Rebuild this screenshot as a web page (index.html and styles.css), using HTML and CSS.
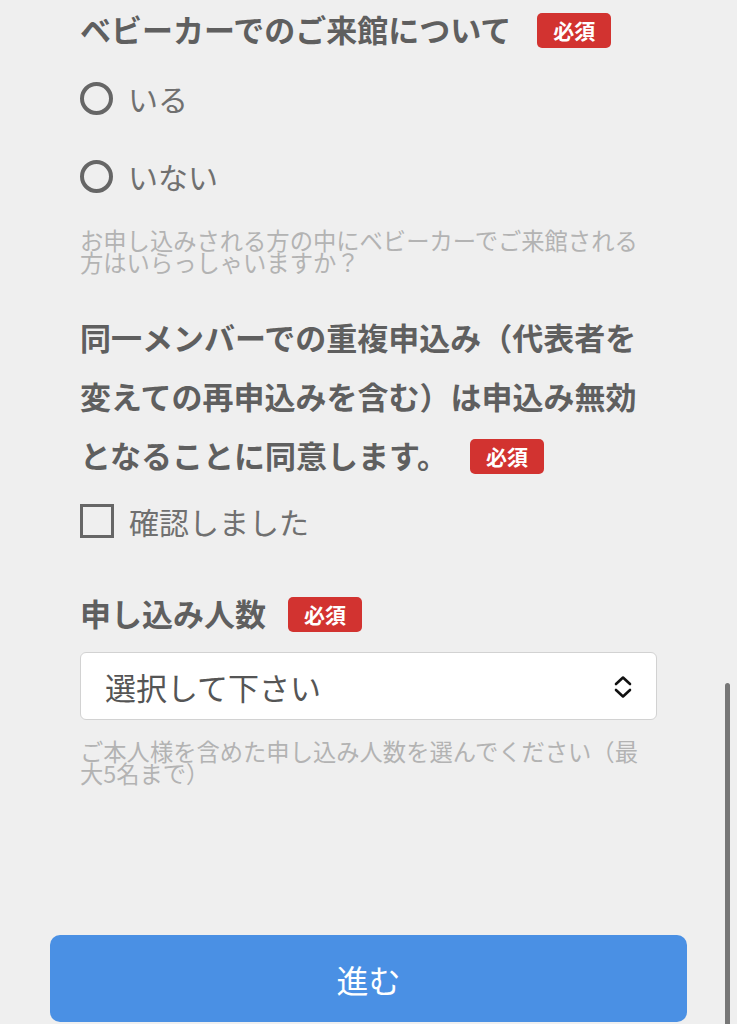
FILE: index.html
```html
<!DOCTYPE html>
<html lang="ja">
<head>
  <meta charset="UTF-8" />
  <meta name="viewport" content="width=device-width, initial-scale=1.0"/>
  <title>お申し込みフォーム</title>
  <link rel="stylesheet" href="styles.css">
</head>
<body>
  <form id="entry-form">
    <div class="campo">
      <p class="pregunta">ベビーカーでのご来館について<span class="requerido requerido-ancho">必須</span></p>
      <label class="opcion">
        <input type="radio" name="babycar" value="いる" />
        <span>いる</span>
      </label>
      <label class="opcion">
        <input type="radio" name="babycar" value="いない" />
        <span>いない</span>
      </label>
      <p class="ayuda">お申し込みされる方の中にベビーカーでご来館される方はいらっしゃいますか？</p>
    </div>

    <div class="campo">
      <p class="pregunta pregunta-larga">同一メンバーでの重複申込み（代表者を変えての再申込みを含む）は申込み無効となることに同意します。<span class="requerido">必須</span></p>
      <label class="opcion opcion-check">
        <input type="checkbox" name="agree" />
        <span>確認しました</span>
      </label>
    </div>

    <div class="campo campo-personas">
      <p class="pregunta">申し込み人数<span class="requerido">必須</span></p>
      <div class="selector">
        <select name="personas">
          <option value="">選択して下さい</option>
          <option value="1">1名</option>
          <option value="2">2名</option>
          <option value="3">3名</option>
          <option value="4">4名</option>
          <option value="5">5名</option>
        </select>
        <svg class="flechas" width="20" height="24" viewBox="0 0 20 24" fill="none" stroke="#111" stroke-width="2.6" stroke-linecap="round" stroke-linejoin="round">
          <polyline points="3,9 10,2.5 17,9" />
          <polyline points="3,15 10,21.5 17,15" />
        </svg>
      </div>
      <p class="ayuda">ご本人様を含めた申し込み人数を選んでください（最大5名まで）</p>
    </div>

    <div class="acciones">
      <button type="submit">進む</button>
    </div>
  </form>

  <div class="scrollbar"></div>
</body>
</html>
```

FILE: styles.css
```css
body {
  margin: 0;
  background-color: #efefef;
  font-family: "Noto Sans CJK JP", "Noto Sans", sans-serif;
  color: #666;
}
#entry-form {
  padding: 0 80px;
}
.campo {
  margin: 0;
}
.pregunta {
  margin: 0;
  font-size: 31px;
  line-height: 58px;
  font-weight: bold;
  color: #5f5f5f;
}
.pregunta-larga {
  margin-top: 34px;
  line-height: 59px;
}
.campo-personas .pregunta {
  margin-top: 26px;
  line-height: 59px;
}
.requerido {
  display: inline-block;
  vertical-align: middle;
  margin-left: 22px;
  margin-top: -6px;
  width: 74px;
  height: 35px;
  line-height: 35px;
  text-align: center;
  background: #d23330;
  color: #fff;
  font-size: 21px;
  font-weight: bold;
  border-radius: 5px;
}
.requerido-ancho {
  margin-left: 26px;
}
.opcion {
  display: flex;
  align-items: center;
  height: 78px;
  gap: 15px;
  font-size: 30px;
  color: #707070;
}
.campo .opcion:first-of-type {
  margin-top: 1px;
}
.opcion input {
  appearance: none;
  margin: 0;
  width: 33px;
  height: 33px;
  border: 4px solid #666;
  border-radius: 50%;
  box-sizing: border-box;
}
.opcion-check {
  height: 72px;
}
.opcion-check input {
  width: 34px;
  height: 34px;
  border-radius: 0;
  border-width: 3.5px;
}
.ayuda {
  margin: 14px 0 0;
  padding-right: 10px;
  font-size: 23.3px;
  line-height: 22px;
  color: #b3b3b3;
}
.selector {
  position: relative;
  margin-top: 10px;
}
.selector select {
  appearance: none;
  width: 100%;
  height: 68px;
  padding: 0 0 0 24px;
  background: #fff;
  border: 1.5px solid #d2d2d2;
  border-radius: 6px;
  font-family: inherit;
  font-size: 31px;
  color: #555;
}
.flechas {
  position: absolute;
  right: 24px;
  top: 23px;
  pointer-events: none;
}
.campo-personas .ayuda {
  margin-top: 20px;
}
.acciones {
  margin: 151px -30px 0;
}
button {
  display: block;
  width: 100%;
  height: 87px;
  background-color: #4a90e4;
  color: white;
  border: none;
  border-radius: 10px;
  font-family: inherit;
  font-size: 32px;
  cursor: pointer;
}
.scrollbar {
  position: fixed;
  left: 725px;
  top: 683px;
  width: 5px;
  height: 360px;
  background: #777;
  border-radius: 3px;
}
```
